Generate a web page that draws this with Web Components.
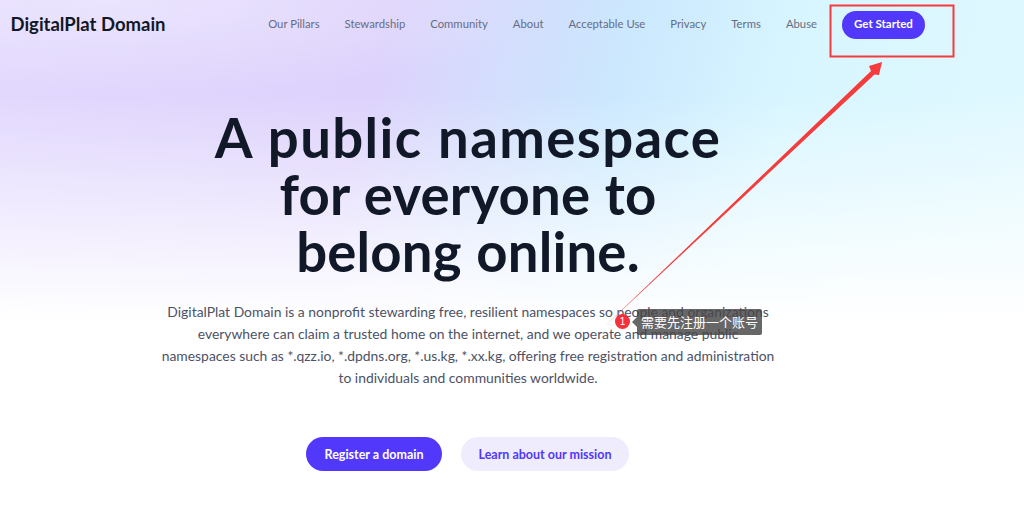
<!DOCTYPE html>
<html lang="en">
<head>
<meta charset="utf-8">
<title>DigitalPlat Domain</title>
<style>
html, body { margin: 0; padding: 0; height: 100%; background: #fff; }
body { font-family: Lato, "Noto Sans", sans-serif; overflow: hidden; }
</style>
</head>
<body>
<dp-page>
	<dp-nav></dp-nav>
	<dp-hero></dp-hero>
	<dp-annotation></dp-annotation>
</dp-page>
<script>
(function() {
	let pageTemplate = document.createElement("template");
	pageTemplate.innerHTML = `
		<style>
		:host {
			display: block;
			position: relative;
			width: 1024px;
			height: 514px;
			overflow: hidden;
			background:
				radial-gradient(ellipse 460px 95px at 110px 0, rgba(255,255,255,0.35), rgba(255,255,255,0)),
				linear-gradient(to bottom, rgba(255,255,255,0) 0, rgba(255,255,255,0) 95px, #fff 320px),
				linear-gradient(105deg, #e2d8fe 0%, #ddd2fc 34%, #cbe8fe 55%, #d8f6ff 70%, #e2f9ff 100%);
		}
		</style>
		<slot></slot>
	`;

	class DpPage extends HTMLElement {
		constructor() {
			super();
			this._shadowRoot = this.attachShadow({mode: "open"});
			this._shadowRoot.appendChild(pageTemplate.content.cloneNode(true));
		}
	}

	let navTemplate = document.createElement("template");
	navTemplate.innerHTML = `
		<style>
		:host {
			display: flex;
			align-items: center;
			height: 50px;
			padding: 0 99px 0 10.5px;
		}
		.logo {
			padding-bottom: 2px;
			font-size: 18.5px;
			font-weight: 700;
			color: #111827;
		}
		nav {
			display: flex;
			align-items: center;
			gap: 25px;
			margin-left: auto;
		}
		a {
			padding-bottom: 3px;
			font-size: 11.3px;
			color: #666d80;
			text-decoration: none;
		}
		a.cta {
			display: flex;
			align-items: center;
			justify-content: center;
			box-sizing: border-box;
			width: 83px;
			height: 28px;
			padding-bottom: 3px;
			border-radius: 14px;
			background: #5138fb;
			color: #fff;
			font-size: 11.5px;
			font-weight: 700;
		}
		</style>
		<span class="logo">DigitalPlat Domain</span>
		<nav>
			<a href="#">Our Pillars</a>
			<a href="#">Stewardship</a>
			<a href="#">Community</a>
			<a href="#">About</a>
			<a href="#">Acceptable Use</a>
			<a href="#">Privacy</a>
			<a href="#">Terms</a>
			<a href="#">Abuse</a>
			<a class="cta" href="#">Get Started</a>
		</nav>
	`;

	class DpNav extends HTMLElement {
		constructor() {
			super();
			this._shadowRoot = this.attachShadow({mode: "open"});
			this._shadowRoot.appendChild(navTemplate.content.cloneNode(true));
		}
	}

	let heroTemplate = document.createElement("template");
	heroTemplate.innerHTML = `
		<style>
		:host {
			display: flex;
			flex-direction: column;
			align-items: center;
			width: 936px;
			padding-top: 59px;
		}
		h1 {
			margin: 0;
			font-size: 54.5px;
			line-height: 57px;
			font-weight: 700;
			letter-spacing: 0.2px;
			word-spacing: 1px;
			color: #111827;
			text-align: center;
		}
		h1 span { letter-spacing: 1.4px; }
		p {
			margin: 21px 0 0;
			width: 640px;
			font-size: 13.9px;
			line-height: 22px;
			color: #4c5266;
			text-align: center;
		}
		.actions {
			display: flex;
			gap: 19px;
			margin-top: 48px;
			margin-left: -1px;
		}
		a {
			display: flex;
			align-items: center;
			justify-content: center;
			height: 34px;
			border-radius: 17px;
			font-size: 12.5px;
			font-weight: 700;
			text-decoration: none;
		}
		.primary { width: 136px; background: #5138fb; color: #fff; }
		.secondary { width: 168px; background: #efecfe; color: #5138fb; }
		</style>
		<h1><span>A public namespace</span><br>for everyone to<br>belong online.</h1>
		<p>DigitalPlat Domain is a nonprofit stewarding free, resilient namespaces so people and organizations<br>everywhere can claim a trusted home on the internet, and we operate and manage public<br>namespaces such as *.qzz.io, *.dpdns.org, *.us.kg, *.xx.kg, offering free registration and administration<br>to individuals and communities worldwide.</p>
		<div class="actions">
			<a class="primary" href="#">Register a domain</a>
			<a class="secondary" href="#">Learn about our mission</a>
		</div>
	`;

	class DpHero extends HTMLElement {
		constructor() {
			super();
			this._shadowRoot = this.attachShadow({mode: "open"});
			this._shadowRoot.appendChild(heroTemplate.content.cloneNode(true));
		}
	}

	let annotationTemplate = document.createElement("template");
	annotationTemplate.innerHTML = `
		<style>
		:host {
			display: block;
			position: absolute;
			inset: 0;
			pointer-events: none;
		}
		svg { position: absolute; left: 0; top: 0; }
		.badge {
			position: absolute;
			left: 615px;
			top: 314px;
			width: 15px;
			height: 15px;
			border-radius: 50%;
			background: #f5323a;
			color: #fff;
			font: 10px/15px "Liberation Sans", sans-serif;
			text-align: center;
		}
		.note {
			position: absolute;
			left: 637px;
			top: 309px;
			width: 125px;
			height: 26px;
			border-radius: 2px;
			background: rgba(70, 70, 70, 0.82);
			color: #fff;
			font: 13px/25px "Noto Sans CJK SC", sans-serif;
			text-align: center;
			white-space: nowrap;
		}
		.note::before {
			content: "";
			position: absolute;
			left: -5px;
			top: 8px;
			border: 5px solid transparent;
			border-left-width: 0;
			border-right-color: rgba(70, 70, 70, 0.82);
		}
		</style>
		<svg width="1024" height="514" viewBox="0 0 1024 514">
			<rect x="830.5" y="5.5" width="123" height="51" fill="none" stroke="#f53b3b" stroke-width="2"/>
			<path d="M604 327 L871 71 L869 66 L882 62 L879 75 L874.5 74.5 Z" fill="#f53b3b"/>
		</svg>
		<span class="badge">1</span>
		<span class="note">需要先注册一个账号</span>
	`;

	class DpAnnotation extends HTMLElement {
		constructor() {
			super();
			this._shadowRoot = this.attachShadow({mode: "open"});
			this._shadowRoot.appendChild(annotationTemplate.content.cloneNode(true));
		}
	}

	customElements.define("dp-page", DpPage);
	customElements.define("dp-nav", DpNav);
	customElements.define("dp-hero", DpHero);
	customElements.define("dp-annotation", DpAnnotation);
})();
</script>
</body>
</html>
